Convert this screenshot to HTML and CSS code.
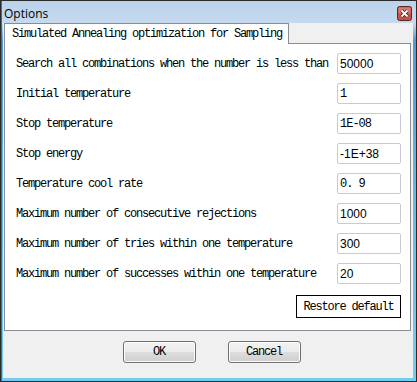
FILE: index.html
```html
<!DOCTYPE html>
<html lang="en">

<head>
    <meta charset="UTF-8" />
    <title>Options</title>
    <link rel="stylesheet" href="styles.css">
</head>

<body>
    <div class="window">
        <div class="titlebar">
            <span class="title">Options</span>
            <span class="close-btn">
                <svg width="15" height="15" viewBox="0 0 15 15">
                    <rect x="0.5" y="0.5" width="14" height="14" rx="2" fill="#c4524a" stroke="#5e2420" />
                    <rect x="1.5" y="1.5" width="12" height="6" rx="1" fill="#e29a92" opacity="0.6" />
                    <path d="M4.5 4.5 L10.5 10.5 M10.5 4.5 L4.5 10.5" stroke="#4a1c18" stroke-width="3.4" />
                    <path d="M4.5 4.5 L10.5 10.5 M10.5 4.5 L4.5 10.5" stroke="#ffffff" stroke-width="1.8" />
                </svg>
            </span>
        </div>
        <div class="client">
            <div class="tabs">
                <div class="tab active">Simulated Annealing optimization for Sampling</div>
            </div>
            <div class="panel">
                <div class="row">
                    <label>Search all combinations when the number is less than</label>
                    <input class="field" type="text" value="50000">
                </div>
                <div class="row">
                    <label>Initial temperature</label>
                    <input class="field mono" type="text" value="1">
                </div>
                <div class="row">
                    <label>Stop temperature</label>
                    <input class="field mono" type="text" value="1E-08">
                </div>
                <div class="row">
                    <label>Stop energy</label>
                    <input class="field" type="text" value="-1E+38">
                </div>
                <div class="row">
                    <label>Temperature cool rate</label>
                    <input class="field mono" type="text" value="0. 9">
                </div>
                <div class="row">
                    <label>Maximum number of consecutive rejections</label>
                    <input class="field" type="text" value="1000">
                </div>
                <div class="row">
                    <label>Maximum number of tries within one temperature</label>
                    <input class="field" type="text" value="300">
                </div>
                <div class="row">
                    <label>Maximum number of successes within one temperature</label>
                    <input class="field" type="text" value="20">
                </div>
                <div class="restore-row">
                    <button class="btn-restore">Restore default</button>
                </div>
            </div>
            <div class="footer">
                <button class="btn">OK</button>
                <button class="btn">Cancel</button>
            </div>
        </div>
    </div>
</body>

</html>
```

FILE: styles.css
```css
body {
    margin: 0;
    padding: 0;
    font-family: "Liberation Mono", monospace;
}

.window {
    width: 417px;
    height: 382px;
    box-sizing: border-box;
    border: 1px solid #2b2b2b;
    padding: 0 3px 3px 2px;
    display: flex;
    flex-direction: column;
    background: linear-gradient(to bottom, #bad2eb 0, #c6daef 22px, #4f9ad3 40px, #62bde6 200px, #72cdee 100%);
    box-shadow: inset 1px 0 0 #3f6f9f;
}

.titlebar {
    height: 22px;
    display: flex;
    align-items: center;
    justify-content: space-between;
    padding: 0 1px 0 1px;
}

.title {
    font-family: "Open Sans", sans-serif;
    font-size: 12px;
    color: #000;
    margin-top: 2px;
}

.close-btn {
    display: flex;
    margin-top: 2px;
}

.client {
    flex: 1;
    background: #f0f0f0;
    padding: 0 2px 0 1px;
    display: flex;
    flex-direction: column;
}

.tabs {
    display: flex;
    height: 20px;
    position: relative;
    z-index: 1;
}

.tab {
    height: 21px;
    box-sizing: border-box;
    border: 1px solid #898c95;
    border-bottom: none;
    background: #fff;
    font-size: 12px;
    letter-spacing: -1.2px;
    padding: 3px 6px 0 7px;
    color: #000;
    white-space: nowrap;
}

.panel {
    height: 288px;
    box-sizing: border-box;
    border: 1px solid #898c95;
    background: #fff;
    padding: 9px 9px 0 11px;
    display: flex;
    flex-direction: column;
    gap: 9px;
}

.row {
    display: flex;
    justify-content: space-between;
    align-items: center;
    height: 21px;
}

.row label {
    font-size: 12px;
    letter-spacing: -1.2px;
    color: #000;
    white-space: nowrap;
}

.field {
    width: 64px;
    height: 21px;
    box-sizing: border-box;
    border: 1px solid #c8cacf;
    border-radius: 2px;
    padding: 0 0 0 2px;
    margin: 0;
    font-family: "Liberation Sans", Arial, sans-serif;
    font-size: 12px;
    color: #000;
    background: #fff;
}

.field.mono {
    font-family: "Liberation Mono", monospace;
    font-size: 12px;
    letter-spacing: -1px;
}

.restore-row {
    display: flex;
    justify-content: flex-end;
    margin-top: 2px;
}

.btn-restore {
    width: 105px;
    height: 23px;
    box-sizing: border-box;
    border: 1px solid #000;
    background: #fff;
    font-family: "Liberation Mono", monospace;
    font-size: 12px;
    letter-spacing: -1.2px;
    padding: 0;
    color: #000;
}

.footer {
    display: flex;
    justify-content: center;
    gap: 32px;
    padding: 10px 0 0 8px;
}

.btn {
    width: 73px;
    height: 22px;
    box-sizing: border-box;
    border: 1px solid #707070;
    border-radius: 3px;
    background: linear-gradient(to bottom, #f2f2f2 0, #ebebeb 50%, #dddddd 51%, #cfcfcf 100%);
    box-shadow: inset 0 0 0 1px #fcfcfc;
    font-family: "Liberation Mono", monospace;
    font-size: 12px;
    letter-spacing: -1.2px;
    padding: 0;
    color: #000;
}
```
